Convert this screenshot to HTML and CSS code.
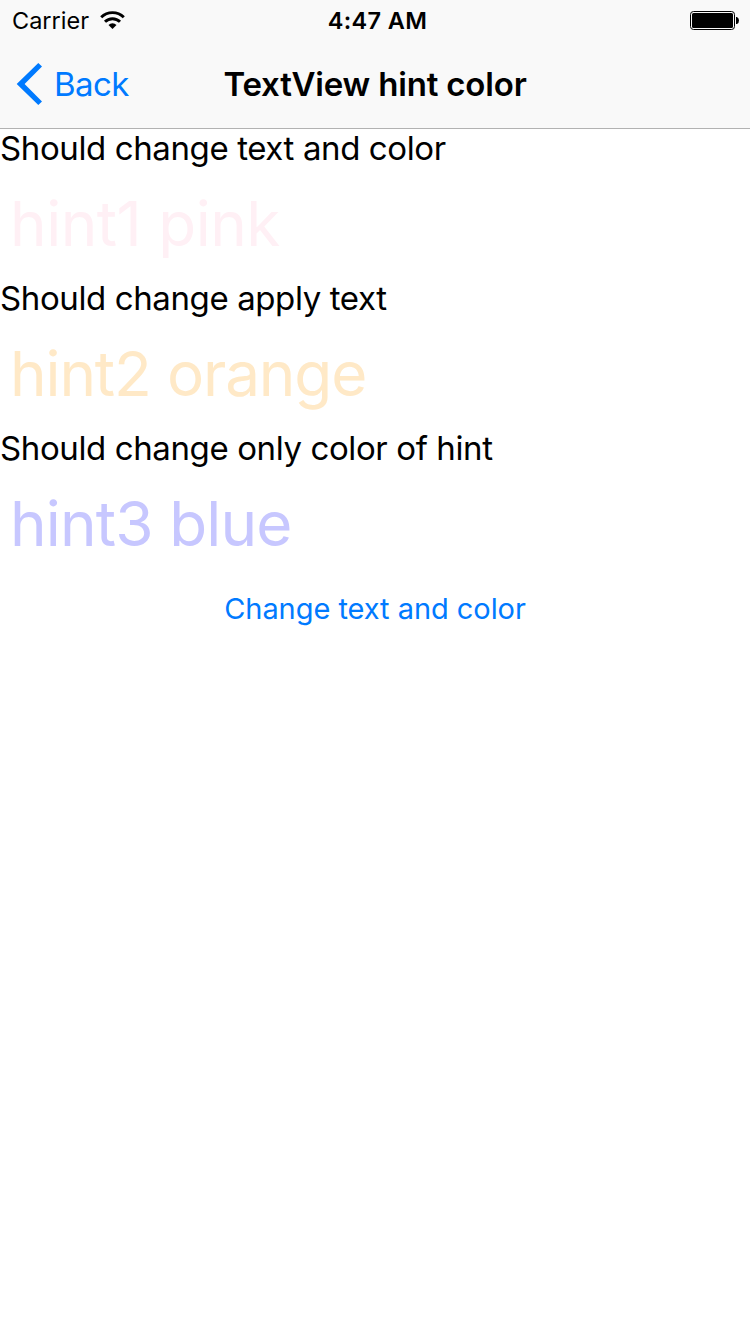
FILE: index.html
```html
<!DOCTYPE html>
<html lang="en">
<head>
<meta charset="utf-8">
<title>TextView hint color</title>
<link rel="stylesheet" href="styles.css">
</head>
<body>
<header class="top">
  <div class="status">
    <div class="carrier"><span class="t carrier-name">Carrier</span>
      <svg class="wifi" width="25" height="18" viewBox="0 0 25 18"><g fill="none" stroke="#000" stroke-width="2.9"><path d="M1.2 6.3a16 16 0 0 1 22.6 0"/><path d="M5 10.8a10.6 10.6 0 0 1 15 0"/></g><path d="M12.5 18l-4-4.1a5.8 5.8 0 0 1 8 0z"/></svg>
    </div>
    <span class="t time">4:47 AM</span>
    <svg class="battery" width="50" height="19" viewBox="0 0 50 19"><rect x=".5" y=".5" width="44" height="18" rx="3" fill="none" stroke="#000"/><rect x="2" y="2" width="41" height="15" rx="1.5"/><path d="M46 6h1q2 1 2 3.5t-2 3.5h-1z"/></svg>
  </div>
  <nav class="nav">
    <a class="back"><svg class="chevron" width="26" height="42" viewBox="0 0 26 42"><path d="M.7 21L22.3 0 26 3.4 8.6 21 26 38.6 22.3 42z" fill="#007aff"/></svg><span class="t back-text">Back</span></a>
    <span class="t title">TextView hint color</span>
  </nav>
</header>
<main>
  <section class="row"><div class="label"><span class="t">Should change text and color</span></div><div class="hint pink"><span class="t">hint1 pink</span></div></section>
  <section class="row"><div class="label"><span class="t">Should change apply text</span></div><div class="hint orange"><span class="t">hint2 orange</span></div></section>
  <section class="row"><div class="label"><span class="t">Should change only color of hint</span></div><div class="hint blue"><span class="t">hint3 blue</span></div></section>
  <div class="action"><span class="t button">Change text and color</span></div>
</main>
</body>
</html>
```
FILE: styles.css
```css
* { box-sizing: border-box; }
body { margin: 0; background: #fff; color: #000; font-family: Inter, sans-serif; height: 1334px; overflow: hidden; }
.t { white-space: nowrap; }
.top { height: 129px; background: #f9f9f9; border-bottom: 1px solid #b2b2b2; }
.status { height: 41px; display: grid; grid-template-columns: 1fr auto 1fr; align-items: center; padding: 0 10px 0 12px; font-size: 23.5px; }
.carrier { display: flex; align-items: center; gap: 11px; }
.time { font-weight: 600; font-size: 23.5px; letter-spacing: .35px; padding-left: 3px; }
.battery { justify-self: end; margin-top: -1px; }
.wifi { margin-top: -1px; }
.nav { height: 86px; display: grid; grid-template-columns: 1fr auto 1fr; align-items: center; padding: 0 16px; font-size: 33px; }
.back { display: flex; align-items: center; gap: 12px; color: #007aff; }
.back-text { letter-spacing: -.6px; }
.title { font-weight: 600; letter-spacing: -.18px; }
.row { height: 150px; }
.label { height: 40px; line-height: 39px; font-size: 33px; letter-spacing: -.39px; }
.hint { height: 110px; line-height: 110px; font-size: 62px; padding-left: 10px; }
.pink { color: #fff0f5; letter-spacing: -.5px; }
.orange { color: #ffe9c7; letter-spacing: -1.15px; }
.blue { color: #c7c7ff; letter-spacing: -.85px; }
.action { height: 60px; line-height: 60px; text-align: center; color: #007aff; font-size: 29px; letter-spacing: -.05px; }
```
